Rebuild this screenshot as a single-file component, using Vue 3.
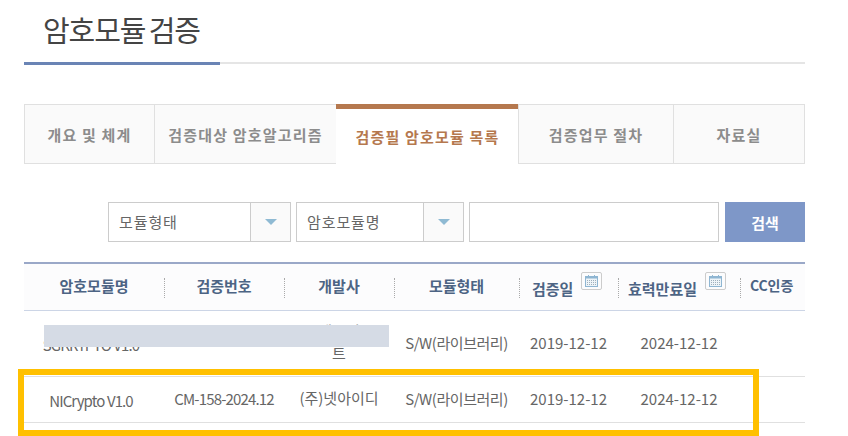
<template>
  <div class="page">
    <h1 class="title">암호모듈 검증</h1>
    <div class="title-line"></div>

    <ul class="tabs">
      <li
        v-for="tab in tabs"
        :key="tab.name"
        class="tab"
        :class="{ active: tab.active }"
      >
        {{ tab.name }}
      </li>
    </ul>

    <div class="search">
      <div v-for="name in selects" :key="name" class="select">
        <span class="select-value">{{ name }}</span>
        <span class="select-arrow"><i></i></span>
      </div>
      <div class="search-input"></div>
      <button class="search-button" type="button">검색</button>
    </div>

    <div class="table-wrap">
      <table>
        <colgroup>
          <col style="width: 140px" />
          <col style="width: 120px" />
          <col style="width: 110px" />
          <col style="width: 125px" />
          <col style="width: 99px" />
          <col style="width: 122px" />
          <col style="width: 65px" />
        </colgroup>
        <thead>
          <tr>
            <th v-for="col in columns" :key="col.name">
              <span class="th-inner">
                <span class="th-name" :class="{ low: col.calendar }">{{ col.name }}</span>
                <span v-if="col.calendar" class="calendar">
                  <svg width="13" height="12" viewBox="0 0 13 12">
                    <rect x="0.5" y="1.5" width="12" height="10" fill="#eef4f8" stroke="#8fb6d2" />
                    <rect x="0.5" y="1.5" width="12" height="2" fill="#8fb6d2" />
                    <path d="M3.5 0v2M9.5 0v2" stroke="#8fb6d2" />
                    <path d="M2 5.5h9M2 7.5h9M2 9.5h9" stroke="#9fb0bc" stroke-dasharray="1 1" />
                  </svg>
                </span>
              </span>
            </th>
          </tr>
        </thead>
        <tbody>
          <tr v-for="(row, index) in rows" :key="index" :class="`row-${index}`">
            <td><span class="name">{{ row.name }}</span></td>
            <td class="number">{{ row.number }}</td>
            <td class="vendor"><span v-html="row.vendor"></span></td>
            <td class="type">{{ row.type }}</td>
            <td>{{ row.checked }}</td>
            <td>{{ row.expires }}</td>
            <td></td>
          </tr>
        </tbody>
      </table>
      <div class="redaction"></div>
      <div class="highlight"></div>
    </div>
  </div>
</template>

<script setup>
const tabs = [
  { name: "개요 및 체계" },
  { name: "검증대상 암호알고리즘" },
  { name: "검증필 암호모듈 목록", active: true },
  { name: "검증업무 절차" },
  { name: "자료실" },
];

const selects = ["모듈형태", "암호모듈명"];

const columns = [
  { name: "암호모듈명" },
  { name: "검증번호" },
  { name: "개발사" },
  { name: "모듈형태" },
  { name: "검증일", calendar: true },
  { name: "효력만료일", calendar: true },
  { name: "CC인증" },
];

const rows = [
  {
    name: "SGKRYPTO V1.0",
    number: "",
    vendor: "에스지<br>트",
    type: "S/W(라이브러리)",
    checked: "2019-12-12",
    expires: "2024-12-12",
  },
  {
    name: "NICrypto V1.0",
    number: "CM-158-2024.12",
    vendor: "(주)넷아이디",
    type: "S/W(라이브러리)",
    checked: "2019-12-12",
    expires: "2024-12-12",
  },
];
</script>

<style scoped>
.page {
  position: relative;
  width: 848px;
  height: 436px;
  overflow: hidden;
  padding-left: 24px;
  box-sizing: border-box;
  background: #fff;
  color: #666;
  font-family: "Noto Sans CJK KR", "Noto Sans", sans-serif;
}

.title {
  margin: 0;
  height: 62px;
  padding: 7px 0 0 19px;
  box-sizing: border-box;
  color: #444;
  font-size: 29px;
  font-weight: 400;
  line-height: 44px;
  letter-spacing: -1.1px;
  word-spacing: -2px;
}

.title-line {
  position: relative;
  width: 781px;
  height: 2px;
  background: #e5e5e5;
}

.title-line::before {
  content: "";
  display: block;
  width: 196px;
  height: 3px;
  background: #6a84b5;
}

.tabs {
  display: grid;
  grid-template-columns: 130px 182px 183px 154px 131px;
  width: 780px;
  height: 60px;
  margin: 40px 0 0;
  padding: 0;
  list-style: none;
  box-sizing: border-box;
}

.tab {
  display: flex;
  align-items: center;
  justify-content: center;
  margin-right: -1px;
  border: 1px solid #e0e0e0;
  background: #fafafa;
  color: #8c8c8c;
  font-size: 15px;
  font-weight: 700;
  letter-spacing: 1.2px;
}

.tab.active {
  margin-right: 0;
  border: 0;
  border-top: 5px solid #b5784e;
  background: #fff;
  color: #b5784e;
  box-sizing: border-box;
}

.tab.active + .tab {
  margin-left: -1px;
}

.search {
  display: flex;
  justify-content: flex-end;
  gap: 5px;
  width: 781px;
  height: 40px;
  margin-top: 38px;
}

.select {
  display: flex;
  width: 183px;
  height: 40px;
  border: 1px solid #ccc;
  box-sizing: border-box;
}

.select + .select {
  width: 168px;
}

.select-value {
  flex: 1;
  padding-left: 10px;
  color: #666;
  font-size: 15px;
  line-height: 37px;
  letter-spacing: 0.9px;
}

.select-arrow {
  display: flex;
  align-items: center;
  justify-content: center;
  width: 39px;
  border-left: 1px solid #ccc;
  background: #fafafa;
}

.select-arrow i {
  width: 0;
  height: 0;
  border-left: 6px solid transparent;
  border-right: 6px solid transparent;
  border-top: 6px solid #8fbad3;
}

.search-input {
  width: 250px;
  height: 40px;
  margin-right: 1px;
  border: 1px solid #ccc;
  box-sizing: border-box;
}

.search-button {
  width: 80px;
  height: 40px;
  padding: 0;
  border: 0;
  background: #7e97c8;
  color: #fff;
  font-family: inherit;
  font-size: 15px;
  font-weight: 700;
}

.table-wrap {
  margin-top: 20px;
  width: 781px;
}

table {
  width: 781px;
  border-collapse: collapse;
  table-layout: fixed;
  border-top: 2px solid #9aa8c8;
}

th {
  height: 46px;
  padding: 0;
  border-bottom: 1px solid #ccd5e6;
  background: #fcfcfd;
  color: #4d6484;
  font-size: 15px;
  font-weight: 700;
}

.th-inner {
  position: relative;
  display: flex;
  align-items: center;
  justify-content: center;
  height: 46px;
  padding-bottom: 4px;
  box-sizing: border-box;
}

th:not(:first-child) .th-inner::before {
  content: "";
  position: absolute;
  left: 0;
  top: 14px;
  height: 20px;
  border-left: 1px dotted #aaa;
}

th:nth-child(5) .th-inner {
  justify-content: flex-start;
  padding-left: 13px;
}

th:nth-child(n + 6) .th-inner {
  justify-content: flex-start;
  padding-left: 10px;
}

th:last-child .th-inner {
  font-size: 14px;
  letter-spacing: -0.1px;
}

.th-name.low {
  margin-top: 6px;
}

.calendar {
  display: flex;
  align-items: center;
  justify-content: center;
  width: 21px;
  height: 18px;
  margin: -8px 0 0 8px;
  border: 1px solid #ccc;
  border-radius: 2px;
  box-sizing: border-box;
}

td {
  padding: 0 0 3px;
  box-sizing: border-box;
  border-bottom: 1px solid #e0e0e0;
  color: #666;
  font-size: 15px;
  font-weight: 400;
  text-align: center;
}

tr.row-0 td {
  height: 66px;
}

tr.row-1 td {
  height: 46px;
}

.name {
  display: inline-block;
  letter-spacing: -0.9px;
  transform: translate(-3px, 2px);
}

td.number {
  letter-spacing: -0.85px;
}

td.type {
  letter-spacing: -0.45px;
}

td.vendor {
  line-height: 22px;
}

.redaction {
  position: absolute;
  left: 44px;
  top: 325px;
  width: 345px;
  height: 22px;
  background: #d5dbe5;
}

.highlight {
  position: absolute;
  left: 18px;
  top: 369px;
  width: 741px;
  height: 67px;
  border: 6px solid #ffc000;
  box-sizing: border-box;
}
</style>
